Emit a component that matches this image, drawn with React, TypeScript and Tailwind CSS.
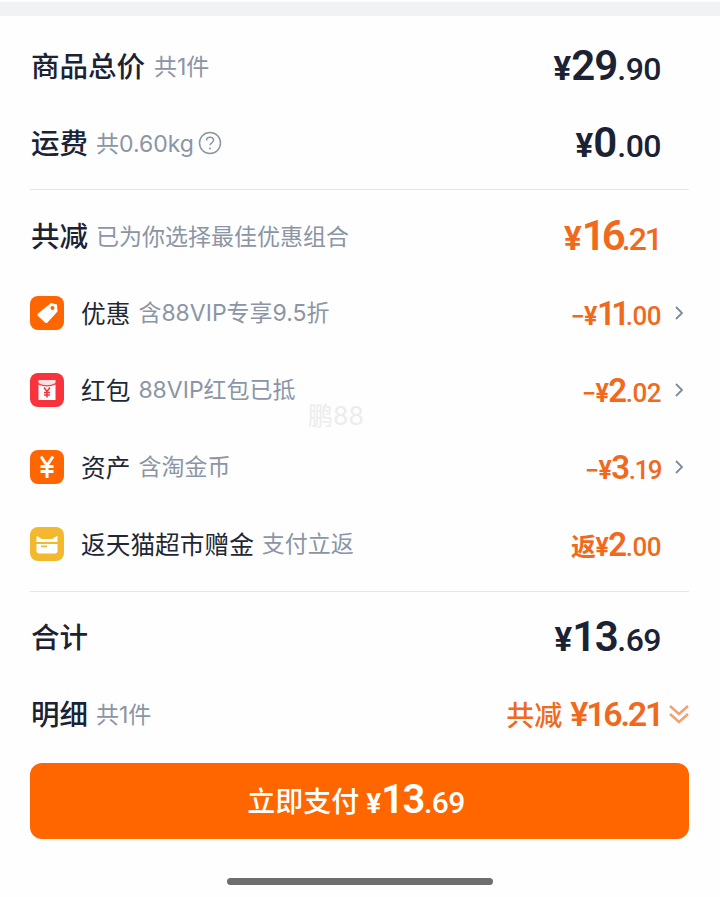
import type { ReactNode } from "react";

const sans = "font-['Noto_Sans_CJK_SC','Noto_Sans',sans-serif]";
const subFont = "font-['Inter','Noto_Sans_CJK_SC',sans-serif]";
const num = "font-['Roboto','Noto_Sans_CJK_SC',sans-serif]";

type AmountProps = {
  prefix?: string;
  yen: string;
  int: string;
  dec: string;
  yenClass: string;
  intClass: string;
  decClass: string;
  color?: string;
};

const Amount = ({ prefix, yen, int, dec, yenClass, intClass, decClass, color = "text-[#1a2233]" }: AmountProps) => (
  <span className={`${num} ${color} flex items-baseline leading-none font-medium`}>
    {prefix && <span className={`${yenClass} font-semibold`}>{prefix}</span>}
    <span className={`${yenClass} font-bold`}>{yen}</span>
    <span className={`${intClass} font-semibold`}>{int}</span>
    <span className={decClass}>{dec}</span>
  </span>
);

const Row = ({ left, right }: { left: ReactNode; right: ReactNode }) => (
  <div className="flex h-[77px] items-center justify-between pr-[59px] pb-[3px] pl-px">
    <div className="flex items-center">{left}</div>
    {right}
  </div>
);

const Title = ({ children }: { children: ReactNode }) => (
  <span className={`${sans} text-[28.500px] leading-none font-medium text-[#1a2233]`}>{children}</span>
);

const Sub = ({ children, className = "" }: { children: ReactNode; className?: string }) => (
  <span className={`${subFont} text-[23px] leading-none text-[#8b95a5] ${className}`}>{children}</span>
);

const Chevron = () => (
  <svg width="12" height="18" viewBox="0 0 12 18" fill="none" className="absolute top-1/2 right-[-24px] -translate-y-1/2">
    <path d="M3 3l6 6-6 6" stroke="#7f8a9b" strokeWidth="1.8" />
  </svg>
);

const TagIcon = () => (
  <svg width="34" height="34" viewBox="0 0 34 34">
    <rect width="34" height="34" rx="8" fill="#ff6600" />
    <path d="M21 7l6 1.500 0.500 7-10 11c-0.800 0.800-1.700 0.800-2.500 0l-7-6.500c-0.800-0.800-0.800-1.700 0-2.500z" fill="#fff" />
    <circle cx="22.500" cy="12" r="2" fill="#ff6600" />
  </svg>
);

const PacketIcon = () => (
  <svg width="34" height="34" viewBox="0 0 34 34">
    <rect width="34" height="34" rx="8" fill="#f8333c" />
    <path d="M8.500 7h17v3c-5 3-12 3-17 0z" fill="#fff" opacity="0.85" />
    <path d="M8.500 11.500c5 2.500 12 2.500 17 0V27h-17z" fill="#fff" />
    <path d="M14 14.500l3 4 3-4M17 18.500v6M14 19.500h6M14 22h6" stroke="#f8333c" strokeWidth="1.600" fill="none" />
  </svg>
);

const YenIcon = () => (
  <svg width="34" height="34" viewBox="0 0 34 34">
    <rect width="34" height="34" rx="8" fill="#ff6600" />
    <path d="M11 6.500l6 9 6-9M17 15.500V28M10.500 16.500h13M10.500 21.500h13" stroke="#fff" strokeWidth="3" fill="none" />
  </svg>
);

const GiftIcon = () => (
  <svg width="34" height="34" viewBox="0 0 34 34">
    <rect width="34" height="34" rx="8" fill="#f2b92f" />
    <path d="M7 9l5 3h10l5-3c0.500 0 0.500 0.500 0.500 1v5h-21v-5c0-0.500 0.200-1 0.500-1z" fill="#fff" />
    <path d="M6.500 17h21v7c0 1.500-1 2.500-2.500 2.500H9c-1.500 0-2.500-1-2.500-2.500z" fill="#fff" />
    <rect x="11" y="18.500" width="6" height="1.800" fill="#f2b92f" />
  </svg>
);

const Discount = ({ icon, title, sub, amount }: { icon: ReactNode; title: string; sub: string; amount: ReactNode }) => (
  <div className="flex h-[77px] items-center justify-between pr-[59px] pb-0.5 pl-[30px]">
    <div className="flex items-center">
      {icon}
      <span className={`${sans} mb-0.5 ml-[17px] text-[24.700px] leading-none text-[#1f2735]`}>{title}</span>
      <Sub className="mt-[1px] ml-[8px]">{sub}</Sub>
    </div>
    <div className="relative">{amount}</div>
  </div>
);

const smallAmount = {
  yenClass: "text-[25px] tracking-[-0.500px]",
  intClass: "text-[33px] tracking-[-1.500px]",
  decClass: "text-[26px] tracking-[-0.500px]",
  color: "text-[#ef6a1d]",
};

const App = () => {
  return (
    <div className="relative flex h-[897px] w-[720px] flex-col overflow-hidden bg-[#fefefe]">
      <div className="mt-0.5 h-3.5 shrink-0 bg-[#f1f2f4]" />

      <div className="mt-[12.500px] pl-[30px]">
        <Row
          left={<><Title>商品总价</Title><Sub className="mt-[4px] ml-[9px]">共1件</Sub></>}
          right={<Amount yen="¥" int="29" dec=".90" yenClass="text-[33px]" intClass="text-[42px] tracking-[-1px]" decClass="text-[32px] tracking-[-0.500px]" />}
        />
        <Row
          left={
            <>
              <Title>运费</Title>
              <Sub className="mt-[4px] ml-[8px]">共0.60kg</Sub>
              <svg width="26" height="26" viewBox="0 0 26 26" fill="none" className="mt-[1px] ml-[3px]">
                <circle cx="13" cy="13" r="10.500" stroke="#8b95a5" strokeWidth="1.500" />
                <path d="M9.500 10.500c0-2 1.500-3.200 3.500-3.200s3.500 1.200 3.500 3c0 2.500-3.500 2.500-3.500 5" stroke="#8b95a5" strokeWidth="1.500" />
                <circle cx="13" cy="18.500" r="1" fill="#8b95a5" />
              </svg>
            </>
          }
          right={<Amount yen="¥" int="0" dec=".00" yenClass="text-[33px]" intClass="text-[42px]" decClass="text-[32px] tracking-[-0.500px]" />}
        />
      </div>

      <div className="mr-[31px] ml-[30px] mt-1.5 h-px bg-[#e4e6ea]" />

      <div className="mt-[9px] pl-[30px]">
        <Row
          left={<><Title>共减</Title><Sub className="mt-[4px] ml-[8px]">已为你选择最佳优惠组合</Sub></>}
          right={<Amount yen="¥" int="16" dec=".21" yenClass="text-[33px]" intClass="text-[42px] tracking-[-4px]" decClass="text-[32px] tracking-[-2px]" color="text-[#ef6a1d]" />}
        />
      </div>

      <Discount icon={<TagIcon />} title="优惠" sub="含88VIP专享9.5折" amount={<><Amount {...smallAmount} intClass="text-[33px] tracking-[-4.500px]" prefix="−" yen="¥" int="11" dec=".00" /><Chevron /></>} />
      <Discount icon={<PacketIcon />} title="红包" sub="88VIP红包已抵" amount={<><Amount {...smallAmount} prefix="−" yen="¥" int="2" dec=".02" /><Chevron /></>} />
      <Discount icon={<YenIcon />} title="资产" sub="含淘金币" amount={<><Amount {...smallAmount} decClass="text-[26px] tracking-[-1.500px]" prefix="−" yen="¥" int="3" dec=".19" /><Chevron /></>} />
      <Discount icon={<GiftIcon />} title="返天猫超市赠金" sub="支付立返" amount={<Amount {...smallAmount} prefix="返" yen="¥" int="2" dec=".00" />} />

      <div className="mr-[31px] ml-[30px] mt-[7px] h-px bg-[#e4e6ea]" />

      <div className="mt-[8px] pl-[30px]">
        <Row
          left={<Title>合计</Title>}
          right={<Amount yen="¥" int="13" dec=".69" yenClass="text-[33px]" intClass="text-[42px] tracking-[-1.500px]" decClass="text-[32px] tracking-[-0.500px]" />}
        />
        <div className="flex h-[77px] items-center justify-between pr-[30px] pb-[3px] pl-px">
          <div className="flex items-center">
            <Title>明细</Title>
            <Sub className="mt-[4px] ml-[8px]">共1件</Sub>
          </div>
          <div className="flex items-center">
            <span className={`${sans} mr-2 text-[28px] leading-none font-medium text-[#ef6a1d]`}>共减</span>
            <span className={`${num} text-[34px] leading-none font-semibold tracking-[-2.300px] text-[#ef6a1d]`}>¥16.21</span>
            <svg width="22" height="24" viewBox="0 0 22 24" fill="none" className="ml-1.5">
              <path d="M2 4l9 8 9-8M2 12l9 8 9-8" stroke="#f0a277" strokeWidth="2.500" />
            </svg>
          </div>
        </div>
      </div>

      <div className="mr-[31px] ml-[30px] mt-[9px] flex h-[76px] items-center justify-center rounded-xl bg-[#ff6600] pr-[7px] pb-0.5 text-white">
        <span className={`${sans} mr-[7px] text-[28px] leading-none font-medium`}>立即支付</span>
        <Amount yen="¥" int="13" dec=".69" color="text-white" yenClass="text-[28px]" intClass="text-[40px] tracking-[-1.500px]" decClass="text-[30px] tracking-[-0.500px]" />
      </div>

      <div className="mx-auto mt-[39px] h-[7px] w-[266px] rounded-full bg-[#6e6e6e]" />

      <span className={`${subFont} absolute top-[400px] left-[308px] text-[25px] leading-8 text-[#ececee]`}>鹏88</span>
    </div>
  );
};

export default App;
